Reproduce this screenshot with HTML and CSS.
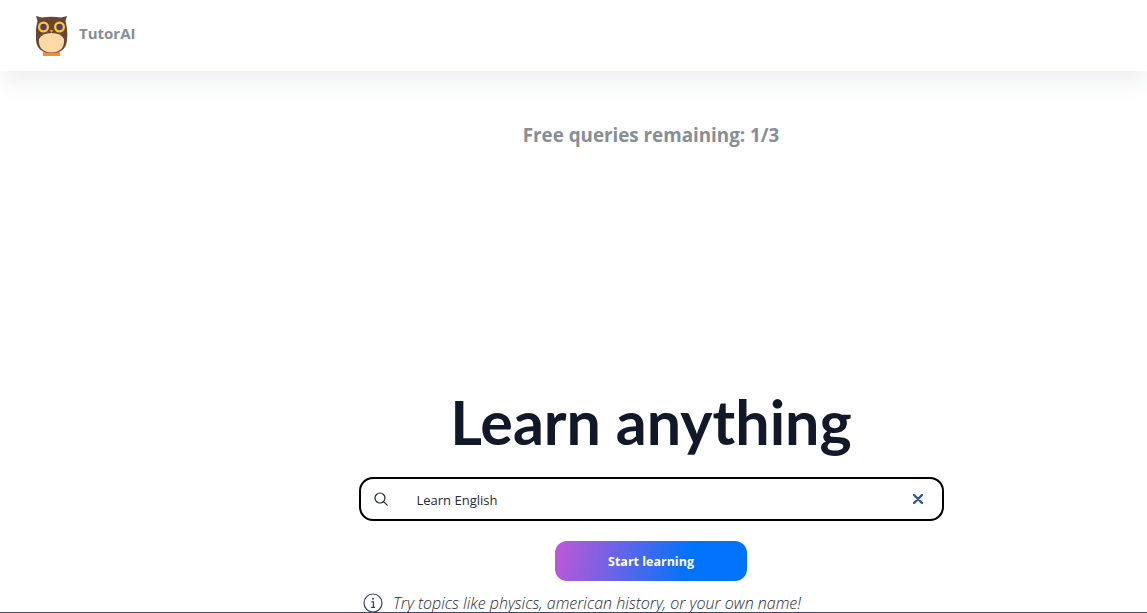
FILE: index.html
```html
<!DOCTYPE html>
<html>
<head>
  <meta charset="utf-8">
  <title>TutorAI</title>
  <link rel="stylesheet" href="styles.css">
</head>
<body>

    <header class="topbar">
        <svg class="logo" viewBox="0 0 32 40" width="32" height="40">
            <rect x="7" y="36" width="17" height="4" fill="#ff8a2b"/>
            <path d="M0 0 L6 1.5 Q16 0 25 1.5 L31 0 L29.5 5 Q32 14 31 24 Q30 37 15.5 37 Q1 37 0 24 Q-1 14 1.5 5 Z" fill="#6b4433"/>
            <path d="M3 23 Q6 17 15.5 17 Q25 17 28 23 Q29 36 15.5 36.5 Q2 36 3 23 Z" fill="#ffd9a6"/>
            <circle cx="7.5" cy="11" r="5.5" fill="#f5cf2e"/>
            <circle cx="7.5" cy="11" r="3.2" fill="#5b3a78"/>
            <circle cx="23.5" cy="11" r="5.5" fill="#f5cf2e"/>
            <circle cx="23.5" cy="11" r="3.2" fill="#5b3a78"/>
            <path d="M13.5 14 H17.5 L15.5 17 Z" fill="#ff8a2b"/>
        </svg>
        <span class="brand">TutorAI</span>
    </header>

    <main class="content">
        <p class="remaining">Free queries remaining: 1/3</p>

        <h1 class="title">Learn anything</h1>

        <form class="search">
            <svg class="search-icon" viewBox="0 0 16 16" width="16" height="16">
                <circle cx="7" cy="7" r="5" fill="none" stroke="#1f2937" stroke-width="1.2"/>
                <path d="M10.8 10.8 L14.2 14.2" stroke="#1f2937" stroke-width="1.2" stroke-linecap="round"/>
            </svg>
            <span class="search-text">Learn English</span>
            <svg class="clear-icon" viewBox="0 0 10 10" width="10" height="10">
                <path d="M1 1 L9 9 M9 1 L1 9" stroke="#2f5597" stroke-width="2.4" stroke-linecap="round"/>
            </svg>
        </form>

        <button class="start" type="button">Start learning</button>

        <p class="hint">
            <svg class="info-icon" viewBox="0 0 20 20" width="20" height="20">
                <circle cx="10" cy="10" r="9" fill="none" stroke="#374151" stroke-width="1.2"/>
                <circle cx="10" cy="5.8" r="1" fill="#374151"/>
                <path d="M8.4 8.8 H10.4 V14.2 M8.2 14.4 H12" fill="none" stroke="#374151" stroke-width="1.2"/>
            </svg>
            <em>Try topics like physics, american history, or your own name!</em>
        </p>
    </main>

</body>
</html>
```

FILE: styles.css
```css
html, body {
    height: 100%;
}

body {
    margin: 0;
    overflow: hidden;
    background: #fff;
    font-family: "Open Sans", "Noto Sans", sans-serif;
    box-sizing: border-box;
    border-bottom: 1px solid #3b4a6b;
}

.topbar {
    display: flex;
    align-items: center;
    gap: 11px;
    height: 71px;
    padding-left: 36px;
    box-sizing: border-box;
    background: #fff;
    box-shadow: 0 10px 25px rgba(100, 116, 120, 0.12);
}

.logo {
    display: block;
}

.brand {
    margin-bottom: 5px;
    font-size: 15px;
    font-weight: 700;
    color: #868e96;
}

.content {
    display: flex;
    flex-direction: column;
    align-items: center;
    width: 600px;
    margin-left: 351px;
}

.remaining {
    margin: 51px 0 0;
    font-size: 18.8px;
    line-height: 26px;
    font-weight: 700;
    color: #868e96;
}

.title {
    margin: 233px 0 0;
    font-family: Lato, "Open Sans", sans-serif;
    font-size: 61px;
    line-height: 82px;
    font-weight: 700;
    color: #111827;
}

.search {
    display: flex;
    align-items: center;
    width: 585px;
    height: 44px;
    margin-top: 14px;
    padding: 0 19px 0 12px;
    box-sizing: border-box;
    border: 2px solid #000;
    border-radius: 14px;
}

.search-text {
    flex: 1;
    margin: 1px 0 0 28px;
    font-size: 13px;
    color: #1f2937;
}

.start {
    width: 192px;
    height: 40px;
    margin-top: 20px;
    border: none;
    border-radius: 12px;
    background: linear-gradient(100deg, #c058d6 0%, #0073fa 70%);
    color: #fff;
    font-family: inherit;
    font-size: 12.5px;
    font-weight: 700;
}

.hint {
    display: flex;
    align-items: center;
    gap: 10px;
    align-self: flex-start;
    margin: 11px 0 0 12px;
    font-size: 16px;
    line-height: 22px;
    font-weight: 300;
    color: #1f2937;
}
```
